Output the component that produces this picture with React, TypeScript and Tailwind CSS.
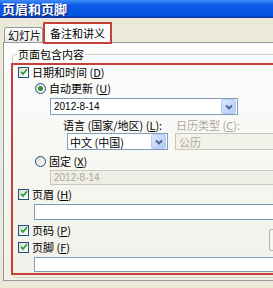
import React from "react";

const cjk = "font-['Noto_Sans_CJK_SC','Noto_Sans_CJK_JP',sans-serif]";
const latin = "font-['Liberation_Sans',Arial,sans-serif]";

const Key = ({ k }: { k: string }) => (
  <>
    {" "}(<span className="underline">{k}</span>)
  </>
);

const CheckBox = () => (
  <span className="w-[11px] h-[11px] shrink-0 border border-[#1c5180] bg-[linear-gradient(135deg,#dcdcd4,#ffffff)] flex items-center justify-center">
    <svg width="8" height="8" viewBox="0 0 8 8">
      <path d="M1 3.8 L3 6 L7 1.2" stroke="#21a121" strokeWidth="1.7" fill="none" />
    </svg>
  </span>
);

const Radio = ({ on }: { on?: boolean }) => (
  <span className="w-[11px] h-[11px] shrink-0 rounded-full border border-[#1c5180] bg-[linear-gradient(135deg,#dcdcd4,#ffffff)] flex items-center justify-center">
    {on && <span className="w-[5px] h-[5px] rounded-full bg-[#3a8f3a]" />}
  </span>
);

const DropBtn = ({ disabled }: { disabled?: boolean }) => (
  <span
    className={
      disabled
        ? "w-[15px] h-[15px] shrink-0 rounded-[2px] border border-[#e0ded3] bg-[#f4f3ee] flex items-center justify-center"
        : "w-[15px] h-[15px] shrink-0 rounded-[2px] border border-[#b6cbf6] bg-[linear-gradient(135deg,#dbe6fd,#b4c9f6)] flex items-center justify-center"
    }
  >
    <svg width="8" height="6" viewBox="0 0 8 6">
      <path
        d="M1 1.5 L4 4.5 L7 1.5"
        stroke={disabled ? "#c9c7ba" : "#4d6185"}
        strokeWidth="1.8"
        fill="none"
      />
    </svg>
  </span>
);

export default function App() {
  return (
    <div className={`w-[273px] h-[288px] overflow-hidden bg-[#ece9d8] flex flex-col text-black ${cjk}`}>
      {/* 标题栏 */}
      <div className="h-[18px] shrink-0 pl-[2px] flex items-center bg-[linear-gradient(to_bottom,#3f8cf8,#0a5ae6_30%,#0555e2_85%,#0a2f9b)]">
        <span className="text-white font-bold text-[13px] leading-[14px] [text-shadow:1px_1px_0_#0a1e6e]">
          页眉和页脚
        </span>
      </div>

      {/* 选项卡 */}
      <div className="h-[24px] shrink-0 flex items-end pl-[4px]">
        <div className="h-[15px] w-[39px] shrink-0 whitespace-nowrap border border-b-0 border-[#919b9c] rounded-t-[3px] bg-[linear-gradient(#ffffff,#ecebe6)] pl-[3px] flex items-center text-[11px] leading-[12px]">
          幻灯片
        </div>
        <div className="relative z-10 -mb-[2px] h-[22px] w-[69px] shrink-0 whitespace-nowrap border-2 border-[#c6403a] bg-[#fcfcfe] flex items-center justify-center text-[11px] leading-[12px]">
          备注和讲义
        </div>
      </div>

      {/* 面板 */}
      <div className="w-[300px] ml-[3px] border border-[#919b9c] bg-[linear-gradient(#fdfdfd,#f1f0e9)] pt-[11px] pl-[8px] pb-[2px] shrink-0">
        <div className="border border-[#d0d0bf] rounded-[3px] pb-[2px]">
          <div className="-mt-[7px] ml-[4px] w-fit px-[1px] h-[13px] bg-[#fcfcfb] text-[11px] leading-[13px]">
            页面包含内容
          </div>

          <div className="mt-[2px] -ml-[2px] w-[290px] border-2 border-[#c6403a] pl-[5px] pb-[1px] text-[11px] leading-[12px]">
            <div className="h-[14px] flex items-center gap-[3px]">
              <CheckBox />
              <span>日期和时间<Key k="D" /></span>
            </div>
            <div className="mt-[2px] h-[14px] ml-[17px] flex items-center gap-[3px]">
              <Radio on />
              <span>自动更新<Key k="U" /></span>
            </div>
            <div className="mt-[3px] ml-[32px] w-[188px] h-[17px] border border-[#7f9db9] bg-white flex items-center justify-between pl-[3px] pr-[1px]">
              <span className={`${latin} text-[10px]`}>2012-8-14</span>
              <DropBtn />
            </div>
            <div className="mt-[3px] ml-[45px] h-[13px] flex items-center">
              <span className="w-[113px] shrink-0">语言 (国家/地区)<Key k="L" />:</span>
              <span className="text-[#aca899]">日历类型<Key k="C" />:</span>
            </div>
            <div className="mt-[2px] ml-[49px] flex gap-[7px]">
              <div className="w-[101px] h-[17px] border border-[#7f9db9] bg-white flex items-center justify-between pl-[2px] pr-[1px]">
                <span>中文 (中国)</span>
                <DropBtn />
              </div>
              <div className="w-[120px] h-[17px] border border-[#c9c7ba] bg-[#f3f2ea] flex items-center justify-between pl-[3px] pr-[1px]">
                <span className="text-[#aca899]">公历</span>
                <DropBtn disabled />
              </div>
            </div>
            <div className="mt-[4px] h-[14px] ml-[17px] flex items-center gap-[3px]">
              <Radio />
              <span>固定<Key k="X" /></span>
            </div>
            <div className="mt-[2px] ml-[32px] w-[240px] h-[15px] border border-[#c9c7ba] bg-[#efeee6] flex items-center pl-[3px]">
              <span className={`${latin} text-[10px] text-[#aca899]`}>2012-8-14</span>
            </div>
            <div className="mt-[2px] h-[14px] flex items-center gap-[3px]">
              <CheckBox />
              <span>页眉<Key k="H" /></span>
            </div>
            <div className="mt-[3px] ml-[16px] w-[250px] h-[16px] border border-[#7f9db9] bg-white" />
            <div className="flex">
              <div className="w-[251px] shrink-0">
                <div className="mt-[3px] h-[14px] flex items-center gap-[3px]">
                  <CheckBox />
                  <span>页码<Key k="P" /></span>
                </div>
                <div className="mt-[3px] h-[14px] flex items-center gap-[3px]">
                  <CheckBox />
                  <span>页脚<Key k="F" /></span>
                </div>
              </div>
              <div className="mt-[9px] w-[20px] h-[22px] border border-[#b5b4a8] rounded-[2px] bg-[#f6f5f0]" />
            </div>
            <div className="mt-[3px] ml-[16px] w-[250px] h-[15px] border border-[#7f9db9] bg-white" />
          </div>
        </div>
      </div>
    </div>
  );
}
